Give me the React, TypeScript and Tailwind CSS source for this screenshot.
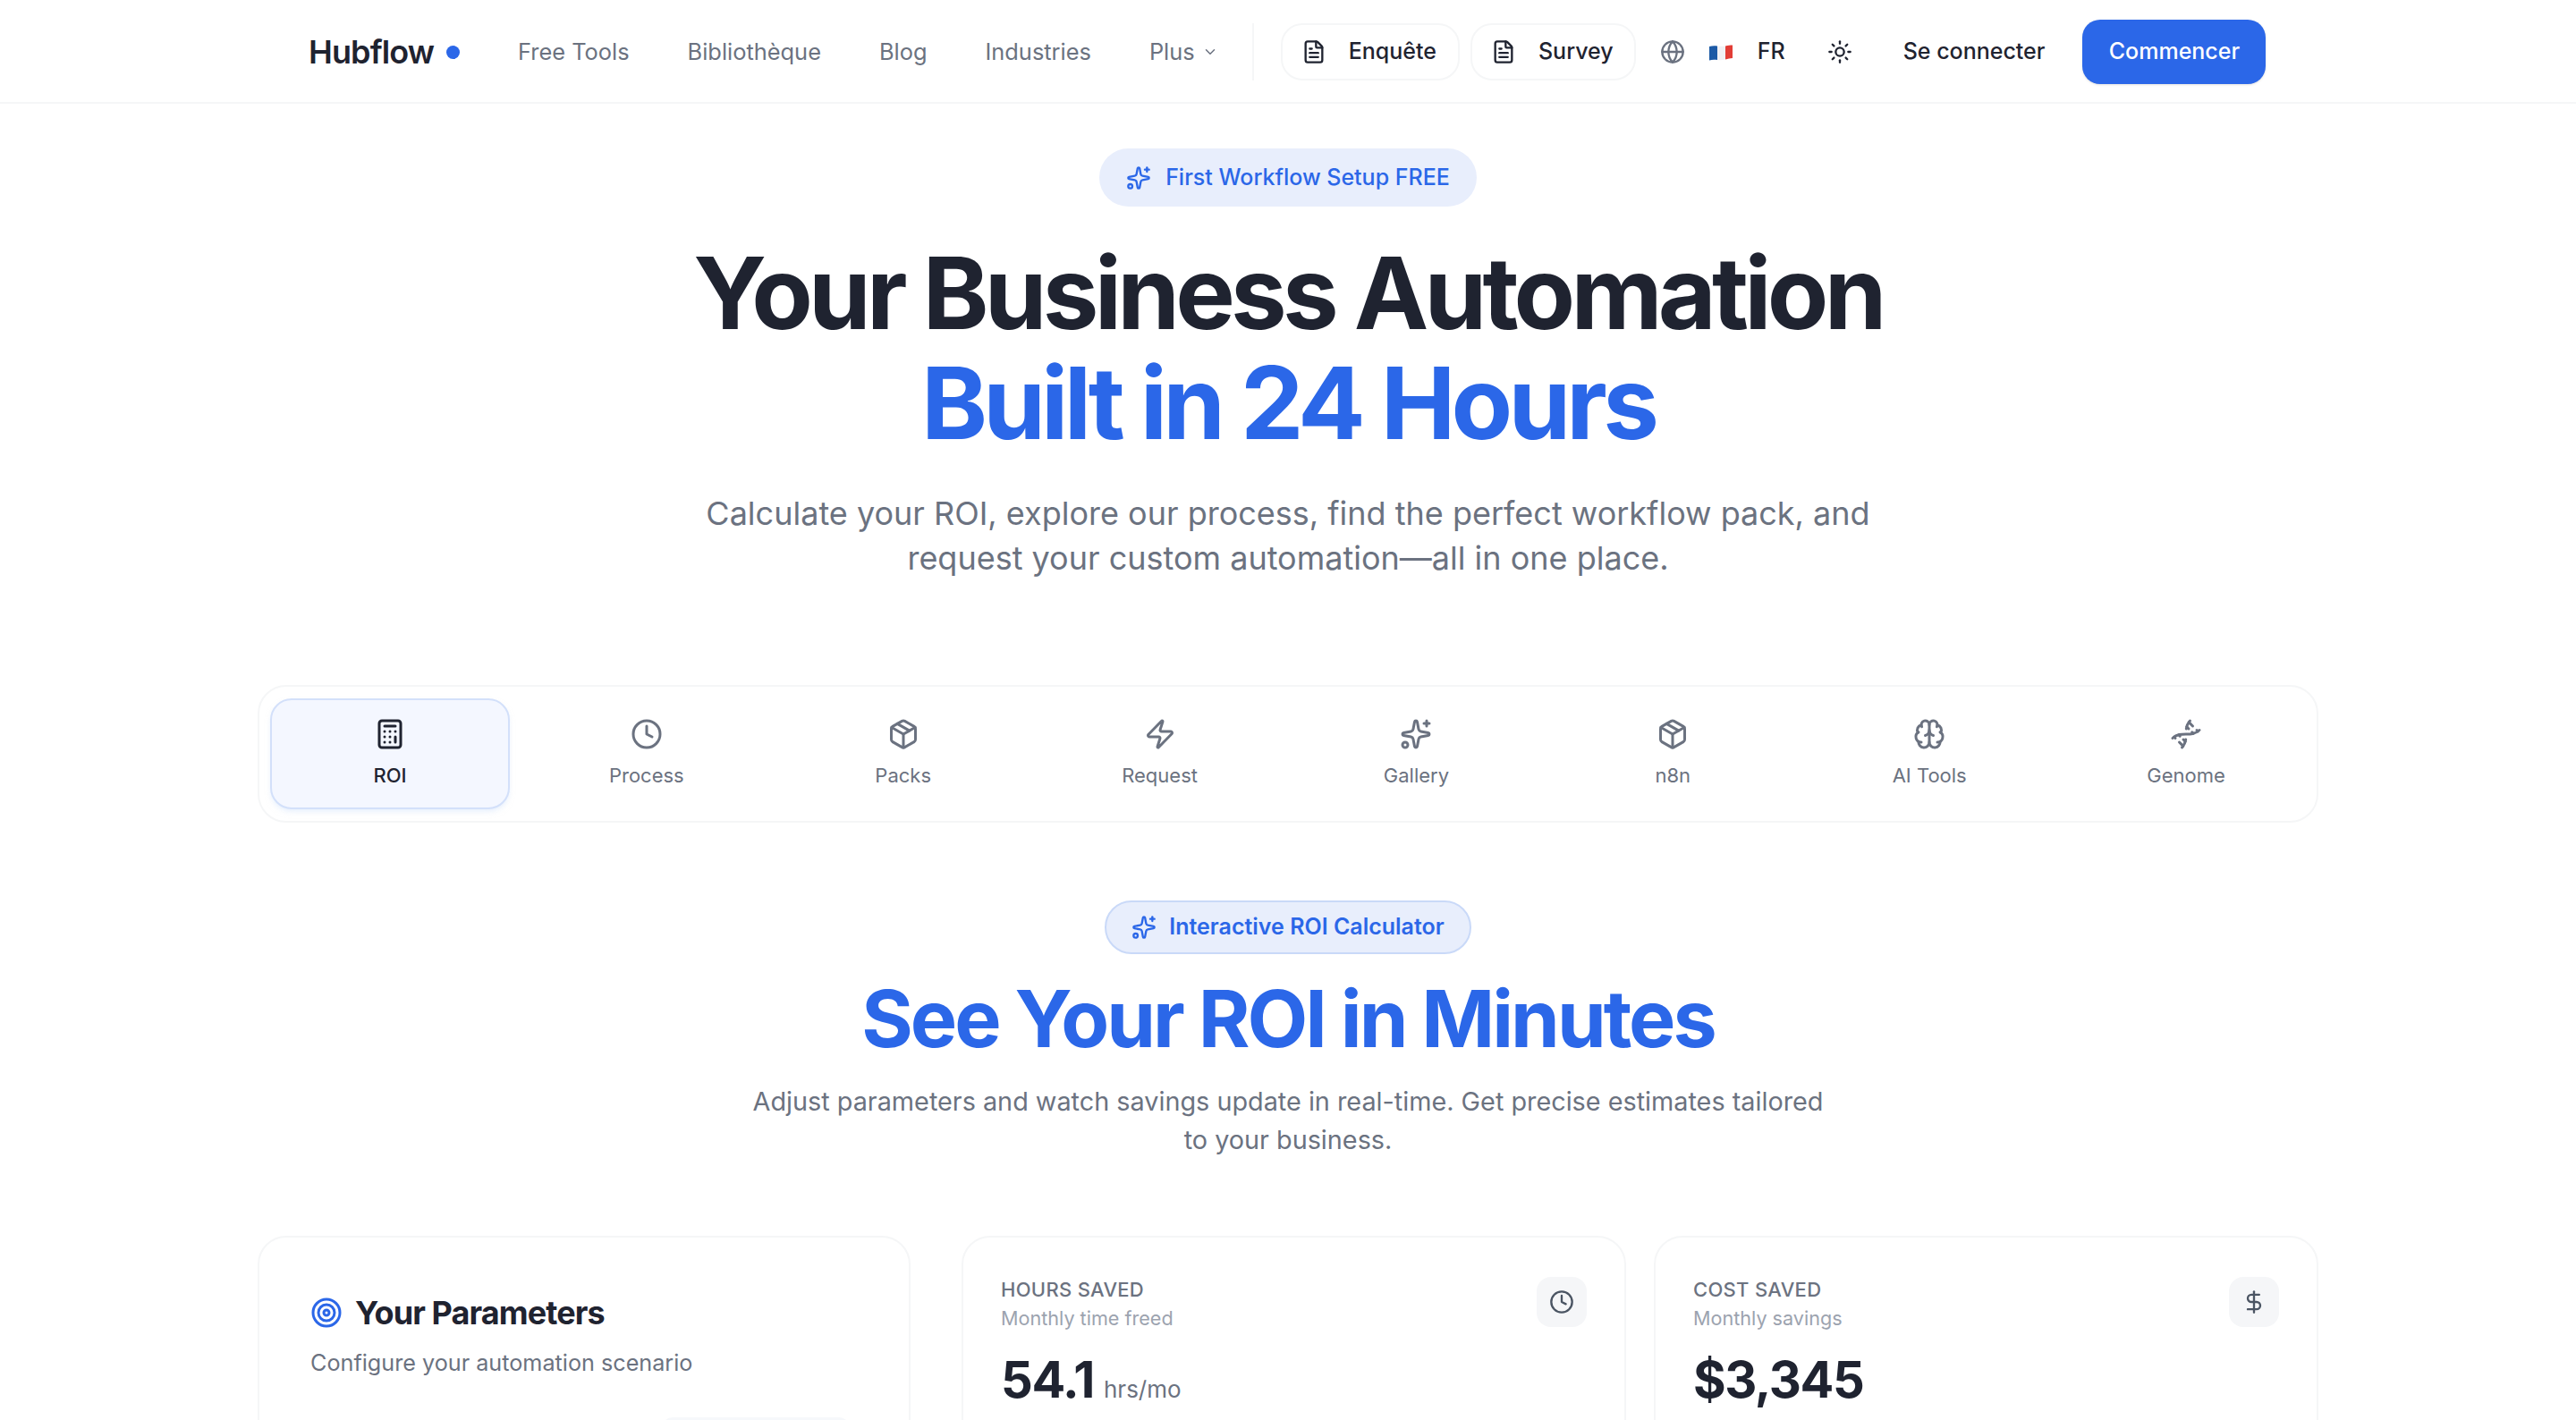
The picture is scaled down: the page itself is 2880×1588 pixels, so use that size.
import { FileText, Globe, Sun, ChevronDown, Calculator, Clock, Package, Zap, Sparkles, Brain, Dna, Target, DollarSign } from "lucide-react";

const tabs = [
  { label: "ROI", Icon: Calculator, active: true },
  { label: "Process", Icon: Clock },
  { label: "Packs", Icon: Package },
  { label: "Request", Icon: Zap },
  { label: "Gallery", Icon: Sparkles },
  { label: "n8n", Icon: Package },
  { label: "AI Tools", Icon: Brain },
  { label: "Genome", Icon: Dna },
];

function Flag() {
  return (
    <svg width="28" height="20" viewBox="0 0 28 20" aria-hidden="true">
      <path d="M1 4c3-1 6-1 9-.6V19c-3-.4-6-.4-9 .4z" fill="#1c5aa6" />
      <path d="M10 3.4c3 .4 6 .6 9 0V18.6c-3 .6-6 .8-9 .4z" fill="#f1f1f4" />
      <path d="M19 3.4c3-.6 5-1 8-1V17c-3 0-5 1-8 1.6z" fill="#e23d36" />
    </svg>
  );
}

function Stat({ title, sub, Icon, value, unit }: { title: string; sub: string; Icon: typeof Clock; value: string; unit?: string }) {
  return (
    <div className="h-[300px] w-[743px] rounded-[32px] border-2 border-[#f5f6f7] bg-white px-[42px] pt-[42px]">
      <div className="flex items-start justify-between">
        <div>
          <div className="text-[22px] leading-[32px] font-medium tracking-[0.3px] text-[#6b7280]">{title}</div>
          <div className="text-[21.6px] leading-[32px] text-[#9ca3af]">{sub}</div>
        </div>
        <div className="mt-[2px] flex h-[56px] w-[56px] items-center justify-center rounded-[16px] bg-[#f5f6f8]">
          <Icon className="h-[28px] w-[28px] text-[#4b5563]" strokeWidth={2} />
        </div>
      </div>
      <div className="mt-[17px] flex items-baseline gap-[11px]">
        <span className="text-[56px] leading-[72px] font-bold tracking-[-1.4px] text-[#1f2330]">{value}</span>
        {unit && <span className="text-[26px] text-[#6b7280]">{unit}</span>}
      </div>
    </div>
  );
}

export default function App() {
  return (
    <div className="h-[1588px] w-[2880px] overflow-hidden bg-white font-['Inter',sans-serif] text-[#1f2330]">
      <header className="flex h-[116px] items-center justify-center border-b-2 border-[#f5f6f7] pt-[2px]">
        <div className="flex w-[2190px] shrink-0 items-center whitespace-nowrap">
          <div className="flex shrink-0 items-center gap-[14px]">
            <span className="text-[36px] leading-[40px] font-semibold tracking-[-0.9px]">Hubflow</span>
            <span className="h-[15px] w-[15px] rounded-full bg-[#2b67e8]" />
          </div>
          <nav className="ml-[65px] flex shrink-0 items-center gap-[65px] text-[25.4px] font-normal text-[#6b7280]">
            <span>Free Tools</span>
            <span>Bibliothèque</span>
            <span>Blog</span>
            <span>Industries</span>
            <span className="flex items-center gap-[8px]">Plus<ChevronDown className="h-[18px] w-[18px]" /></span>
          </nav>
          <div className="ml-[38px] h-[64px] w-[2px] shrink-0 bg-[#f5f6f7]" />
          <div className="ml-[30px] flex shrink-0 items-center gap-[12px] text-[25px] font-medium">
            <span className="flex h-[64px] items-center gap-[25px] rounded-[24px] border-2 border-[#f5f6f7] pr-[24px] pl-[21px]"><FileText className="h-[28px] w-[28px]" />Enquête</span>
            <span className="flex h-[64px] items-center gap-[25px] rounded-[24px] border-2 border-[#f5f6f7] pr-[23px] pl-[21px]"><FileText className="h-[28px] w-[28px]" />Survey</span>
          </div>
          <Globe className="ml-[27px] h-[28px] w-[28px] shrink-0 text-[#6b7280]" />
          <span className="ml-[26px] shrink-0"><Flag /></span>
          <span className="ml-[27px] shrink-0 text-[25px] font-medium">FR</span>
          <Sun className="ml-[47px] h-[28px] w-[28px] shrink-0" />
          <span className="ml-[57px] shrink-0 text-[25px] font-medium">Se connecter</span>
          <span className="ml-[42px] flex h-[72px] w-[205px] shrink-0 items-center justify-center rounded-[20px] bg-[#2b67e8] text-[25px] font-medium text-white shadow-sm">Commencer</span>
        </div>
      </header>

      <section className="flex flex-col items-center pt-[50px]">
        <div className="flex h-[65px] items-center gap-[16px] rounded-full bg-[#e8eefc] px-[30px] text-[25px] font-medium text-[#2b67e8]">
          <Sparkles className="h-[28px] w-[28px]" />First Workflow Setup FREE
        </div>
        <h1 className="mt-[35px] text-center text-[112px] leading-[123px] font-bold tracking-[-4.8px]">
          Your Business Automation
          <br />
          <span className="text-[#2b67e8]">Built in 24 Hours</span>
        </h1>
        <p className="mt-[37px] w-[1400px] text-center text-[36px] leading-[50px] text-[#6b7280]">
          Calculate your ROI, explore our process, find the perfect workflow pack, and request your custom automation—all in one place.
        </p>
      </section>

      <div className="mx-auto mt-[117px] grid h-[154px] w-[2304px] grid-cols-8 gap-[19px] rounded-[32px] border-2 border-[#f5f6f7] bg-white px-[12px] py-[13px]">
        {tabs.map(({ label, Icon, active }) => (
          <div key={label} className={active ? "flex flex-col items-center justify-center gap-[12px] rounded-[24px] border-2 border-[#d3e0fa] bg-[#f4f7ff] font-medium text-[#1f2330] shadow-md shadow-blue-100/50" : "flex flex-col items-center justify-center gap-[12px] font-normal text-[#6b7280]"}>
            <Icon className="h-[36px] w-[36px]" />
            <span className="text-[22px] leading-[32px]">{label}</span>
          </div>
        ))}
      </div>

      <section className="mt-[87px] flex flex-col items-center">
        <div className="flex h-[60px] items-center gap-[14px] rounded-full border-2 border-[#c9d9f8] bg-[#e8eefc] px-[28px] text-[25px] font-semibold text-[#2b67e8]">
          <Sparkles className="h-[28px] w-[28px]" />Interactive ROI Calculator
        </div>
        <h2 className="mt-[24px] text-[88px] leading-[96px] font-bold tracking-[-3px] text-[#2b67e8]">See Your ROI in Minutes</h2>
        <p className="mt-[23px] w-[1220px] text-center text-[28.8px] leading-[43px] text-[#6b7280]">
          Adjust parameters and watch savings update in real-time. Get precise estimates tailored to your business.
        </p>
      </section>

      <div className="mx-auto mt-[86px] flex w-[2304px]">
        <div className="h-[300px] w-[730px] rounded-[32px] border-2 border-[#f5f6f7] bg-white px-[57px] pt-[62px]">
          <div className="flex items-center gap-[14px]">
            <Target className="h-[36px] w-[36px] text-[#2b67e8]" />
            <span className="text-[36px] leading-[44px] font-bold tracking-[-0.9px]">Your Parameters</span>
          </div>
          <p className="mt-[16px] text-[25.2px] leading-[36px] text-[#6b7280]">Configure your automation scenario</p>
          <div className="mt-[43px] ml-[393px] h-[40px] w-[210px] rounded-[12px] bg-[#f6f8fb]" />
        </div>
        <div className="ml-[57px] flex gap-[31px]">
          <Stat title="HOURS SAVED" sub="Monthly time freed" Icon={Clock} value="54.1" unit="hrs/mo" />
          <Stat title="COST SAVED" sub="Monthly savings" Icon={DollarSign} value="$3,345" />
        </div>
      </div>
    </div>
  );
}
